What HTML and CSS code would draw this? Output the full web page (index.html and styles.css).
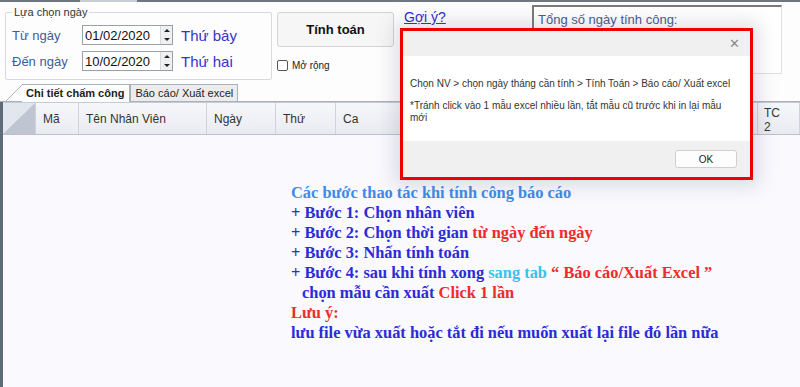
FILE: index.html
```html
<!DOCTYPE html>
<html lang="vi">
<head>
<meta charset="utf-8">
<title>Chấm công</title>
<link rel="stylesheet" href="styles.css">
</head>
<body>
<div class="app">
  <div class="topbar"><span class="topbar-seg"></span></div>
  <div class="panel">
    <fieldset class="group">
      <legend>Lựa chọn ngày</legend>
      <div class="date-row">
        <span class="lbl">Từ ngày</span>
        <span class="date"><span class="date-val">01/02/2020</span><span class="spin"><i class="up"></i><i class="down"></i></span></span>
        <span class="dow">Thứ bảy</span>
      </div>
      <div class="date-row">
        <span class="lbl">Đến ngày</span>
        <span class="date"><span class="date-val">10/02/2020</span><span class="spin"><i class="up"></i><i class="down"></i></span></span>
        <span class="dow">Thứ hai</span>
      </div>
    </fieldset>
    <div class="actions">
      <button class="btn-calc">Tính toán</button>
      <label class="chk"><span class="box"></span>Mở rộng</label>
    </div>
    <a class="hint">Gợi ý?</a>
    <div class="total">Tổng số ngày tính công:</div>
  </div>
  <div class="tabs">
    <svg class="tab-slant" width="17" height="18" viewBox="0 0 17 18"><path d="M0 18 L17 1" stroke="#a9b1bf" stroke-width="1" fill="none"/></svg>
    <div class="tab active">Chi tiết chấm công</div>
    <div class="tab">Báo cáo/ Xuất excel</div>
  </div>
  <div class="grid">
    <div class="ghead">
      <div class="gc corner"></div>
      <div class="gc c-ma">Mã</div>
      <div class="gc c-ten">Tên Nhân Viên</div>
      <div class="gc c-ngay">Ngày</div>
      <div class="gc c-thu">Thứ</div>
      <div class="gc c-ca">Ca</div>
      <div class="gc c-fill"></div>
      <div class="gc c-tc">TC<br>2</div>
    </div>
    <div class="gbody">
      <div class="guide">
        <div class="l-title">Các bước thao tác khi tính công báo cáo</div>
        <div>+ Bước 1: Chọn nhân viên</div>
        <div>+ Bước 2: Chọn thời gian <span class="red">từ ngày đến ngày</span></div>
        <div>+ Bước 3: Nhấn tính toán</div>
        <div>+ Bước 4: sau khi tính xong <span class="cyan">sang tab</span> <span class="red">“ Báo cáo/Xuất Excel ”</span></div>
        <div class="indent">chọn mẫu cần xuất <span class="red">Click 1 lần</span></div>
        <div class="red">Lưu ý:</div>
        <div>lưu file vừa xuất hoặc tắt đi nếu muốn xuất lại file đó lần nữa</div>
      </div>
    </div>
  </div>
  <div class="dialog-frame">
    <div class="dialog">
      <div class="d-title"><span class="d-close">✕</span></div>
      <div class="d-content">
        <p>Chọn NV &gt; chọn ngày tháng cần tính &gt; Tính Toán &gt; Báo cáo/ Xuất excel</p>
        <p class="p2"> *Tránh click vào 1 mẫu excel nhiều lần, tắt mẫu cũ trước khi in lại mẫu<br>mới</p>
      </div>
      <div class="d-foot"><button class="ok">OK</button></div>
    </div>
  </div>
</div>
</body>
</html>
```
FILE: styles.css
```css
* { box-sizing: border-box; }
html, body { margin: 0; padding: 0; }
body {
  width: 800px; height: 387px; overflow: hidden;
  font-family: "Liberation Sans", Arial, sans-serif;
  background: #fbfbfe;
}
.app { position: relative; width: 800px; height: 387px; }

.topbar { height: 2px; background: #6d7681; display: flex; }
.topbar-seg { margin-left: 80px; width: 57px; background: #c9ced6; }

.panel { height: 82px; display: flex; align-items: flex-start; background: #fdfdfe; }

.group {
  margin: 4px 0 0 5px; padding: 4px 0 0 6px;
  width: 267px; height: 74px;
  border: 1px solid #d6d9df; border-radius: 2px;
}
.group legend {
  font-size: 11px; color: #333; padding: 0 2px; margin-left: 0;
  line-height: 12px;
}
.date-row { display: flex; align-items: center; height: 26px; }
.lbl { width: 70px; font-size: 13px; color: #3f5c98; }
.date {
  display: flex; align-items: center; justify-content: space-between;
  width: 91px; height: 20px; background: #fff;
  border: 1px solid #9aa0aa; padding-left: 2px;
}
.date-val { font-size: 13px; color: #111; }
.spin { display: flex; flex-direction: column; width: 12px; height: 18px; border-left: 1px solid #d8d8d8; background: #f0f0f0; }
.spin i { flex: 1; display: flex; align-items: center; justify-content: center; }
.spin .up::before { content: ""; border: 3px solid transparent; border-bottom: 3px solid #222; border-top: 0; }
.spin .down::before { content: ""; border: 3px solid transparent; border-top: 3px solid #222; border-bottom: 0; }
.dow { margin-left: 8px; font-size: 15px; color: #3434c8; }

.actions { margin: 10px 0 0 5px; width: 117px; display: flex; flex-direction: column; }
.btn-calc {
  height: 35px; width: 117px; font: bold 13px "Liberation Sans", Arial, sans-serif; color: #111;
  background: #f6f6f6; border: 1px solid #d3d3d3; border-radius: 3px;
}
.chk { margin-top: 13px; display: flex; align-items: center; font-size: 10px; color: #222; }
.chk .box { width: 11px; height: 11px; border: 1px solid #555; border-radius: 2px; background: #fff; margin-right: 4px; }

.hint { margin: 7px 0 0 10px; font-size: 14px; color: #2d2dcc; text-decoration: underline; width: 128px; }

.total {
  margin: 3px 0 0 0; width: 250px; height: 69px;
  border: 1px solid #e0e0e0; border-top: 2px solid #7a7a7a; border-left: 2px solid #7a7a7a;
  background: #fff; font-size: 13px; color: #48598e; padding: 5px 0 0 4px;
}

.tabs { height: 18px; display: flex; align-items: flex-end; padding-left: 5px; border-bottom: 1px solid #a9b1bf; background: #fdfdfe; }
.tab-slant { display: block; margin-bottom: -1px; }
.tab {
  height: 17px; font-size: 11px; padding: 2px 4px 0 4px; color: #222; white-space: nowrap;
  border: 1px solid #a9b1bf; border-bottom: 0; background: #ececec;
}
.tab.active { font-weight: bold; font-size: 11px; padding: 2px 5px 0 4px; background: #fdfdfe; border-left: 0; height: 18px; margin-bottom: -1px; }

.grid { height: 285px; border-left: 3px solid #5f6b78; display: flex; flex-direction: column; }
.ghead { height: 33px; display: flex; background: linear-gradient(#f6f7fa, #e9ebf1); border-bottom: 1px solid #b9c1ce; border-top: 1px solid #c5ccd6; }
.gc { height: 100%; border-right: 1px solid #cdd2dc; font-size: 12px; color: #333; padding: 9px 0 0 7px; }
.corner { width: 33px; padding: 0; background: linear-gradient(to bottom right, #e2e7ef 49%, #bfc6d2 51%); }
.c-ma { width: 43px; }
.c-ten { width: 128px; }
.c-ngay { width: 69px; }
.c-thu { width: 60px; }
.c-ca { width: 90px; }
.c-fill { flex: 1; }
.c-tc { width: 42px; padding: 3px 0 0 6px; line-height: 14px; }
.gbody { flex: 1; background: #f9f9fe; padding: 48px 0 0 288px; }

.guide { font: bold 16.4px/20px "Liberation Serif", "Times New Roman", serif; color: #2b2bd8; white-space: nowrap; }
.guide .l-title { color: #3d8be8; }
.guide .red { color: #ef2b2b; }
.guide .cyan { color: #37c2ee; }
.guide .indent { padding-left: 11px; }

.dialog-frame {
  position: absolute; left: 400px; top: 28px; width: 353px; height: 152px;
  border: 3px solid #ee0000;
  box-shadow: 0 0 18px 6px rgba(90, 90, 110, 0.18);
}
.dialog { height: 100%; display: flex; flex-direction: column; background: #fff; }
.d-title { height: 25px; background: #f0f0f0; display: flex; justify-content: flex-end; align-items: center; padding-right: 10px; }
.d-close { font-size: 13px; color: #8a8a8a; font-family: "DejaVu Sans", sans-serif; font-weight: 300; }
.d-content { flex: 1; background: #fff; padding: 22px 0 0 7px; font-family: "Liberation Sans", Arial, sans-serif; font-size: 10px; color: #333; }
.d-content p { margin: 0; line-height: 12px; }
.d-content .p2 { margin-top: 10px; }
.d-foot { height: 36px; background: #f0f0f0; display: flex; justify-content: flex-end; align-items: center; padding-right: 13px; }
.ok { width: 62px; height: 18px; background: #fdfdfd; border: 1px solid #cfcfcf; border-radius: 3px; font: 10px "Liberation Sans", Arial, sans-serif; color: #222; }
```
